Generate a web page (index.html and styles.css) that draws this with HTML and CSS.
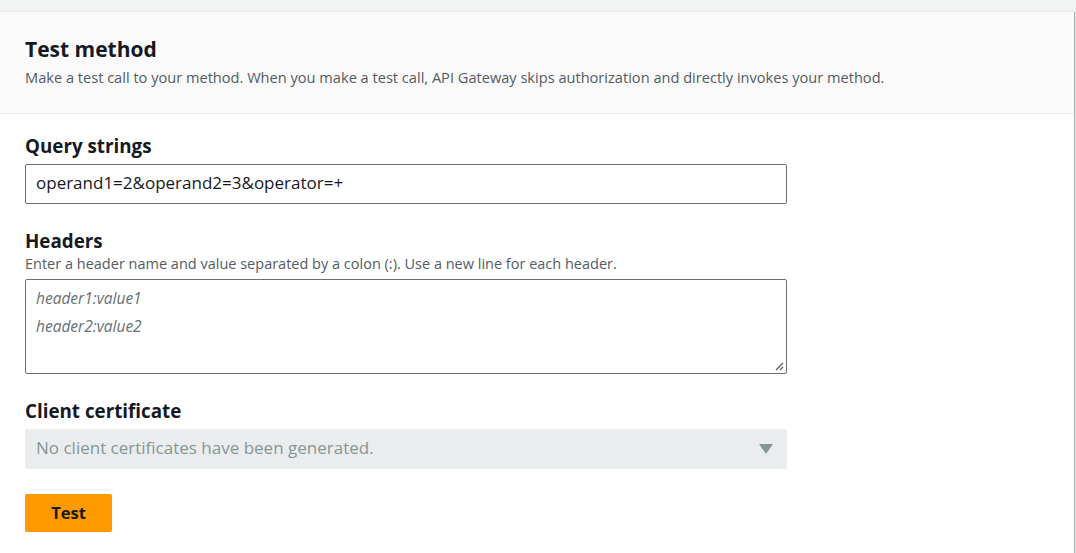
FILE: index.html
```html
<!DOCTYPE html>
<html>
<head>
<meta charset="utf-8">
<link rel="stylesheet" href="styles.css">
</head>
<body>
<div class="card">
  <div class="card-header">
    <h2 class="title">Test method</h2>
    <p class="desc">Make a test call to your method. When you make a test call, API Gateway skips authorization and directly invokes your method.</p>
  </div>
  <div class="card-body">
    <div class="field">
      <div class="label">Query strings</div>
      <div class="input">operand1=2&amp;operand2=3&amp;operator=+</div>
    </div>
    <div class="field">
      <div class="label">Headers</div>
      <div class="hint">Enter a header name and value separated by a colon (:). Use a new line for each header.</div>
      <div class="textarea">
        <div class="ph">header1:value1</div>
        <div class="ph">header2:value2</div>
        <svg class="grip" width="9" height="9" viewBox="0 0 9 9"><path d="M8 1 L1 8 M8 5 L5 8" stroke="#545b64" stroke-width="1.2" fill="none"/></svg>
      </div>
    </div>
    <div class="field">
      <div class="label">Client certificate</div>
      <div class="select"><span>No client certificates have been generated.</span><span class="caret"></span></div>
    </div>
    <div class="actions"><button class="btn">Test</button></div>
  </div>
</div>
</body>
</html>
```
FILE: styles.css
```css
html, body { margin: 0; padding: 0; }
body {
  background: #f2f3f3;
  font-family: "Open Sans", "Noto Sans", sans-serif;
  color: #16191f;
  height: 553px;
  overflow: hidden;
}
.card {
  margin-top: 11px;
  margin-right: 2px;
  background: #fff;
  border-top: 1px solid #eaeded;
  box-shadow: 1px 1px 1px rgba(0,28,36,0.3);
  height: 560px;
}
.card-header {
  background: #fafafa;
  border-bottom: 1px solid #eaeded;
  padding: 24px 25px 0 25px;
  height: 77px;
}
.title {
  margin: 0;
  font-size: 21px;
  font-weight: 700;
  line-height: 26px;
}
.desc {
  margin: 4px 0 0;
  font-size: 14.6px;
  line-height: 22px;
  color: #545b64;
}
.card-body {
  padding: 21px 25px 0 25px;
  display: flex;
  flex-direction: column;
}
.field { display: flex; flex-direction: column; width: 762px; margin-bottom: 26px; }
.label { font-size: 18.8px; font-weight: 700; line-height: 22px; margin-bottom: 7px; }
.hint { font-size: 14.5px; line-height: 16px; color: #545b64; margin-top: -3px; margin-bottom: 7px; }
.input {
  border: 1px solid #687078;
  border-radius: 2px;
  box-sizing: border-box;
  height: 40px;
  padding: 0 10px 2px;
  font-size: 17px;
  line-height: 36px;
}
.textarea {
  position: relative;
  box-sizing: border-box;
  height: 95px;
  border: 1px solid #687078;
  border-radius: 2px;
  padding: 4px 10px;
}
.ph { font-size: 15.5px; font-style: italic; color: #687078; line-height: 28px; }
.grip { position: absolute; right: 2px; bottom: 2px; }
.select {
  box-sizing: border-box;
  height: 40px;
  background: #eaeded;
  border-radius: 2px;
  padding: 0 14px 3px 11px;
  font-size: 17px;
  color: #879596;
  display: flex;
  align-items: center;
  justify-content: space-between;
}
.caret {
  width: 0; height: 0;
  margin-top: 3px;
  border-left: 7px solid transparent;
  border-right: 7px solid transparent;
  border-top: 10px solid #879596;
}
.actions { margin-top: -1px; }
.btn {
  width: 87px;
  height: 38px;
  background: #ff9900;
  border: none;
  border-radius: 2px;
  font-family: inherit;
  font-size: 16.5px;
  font-weight: 700;
  color: #16191f;
  padding: 0 0 2px;
}
```
